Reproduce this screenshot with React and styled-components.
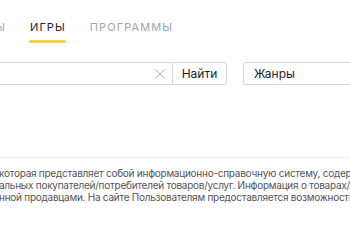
import styled, { createGlobalStyle } from 'styled-components'

const GlobalStyle = createGlobalStyle`
   html, body {
      margin: 0;
      padding: 0;
      background: #ffffff;
      overflow: hidden;
   }
   body {
      font-family: Inter, 'Noto Sans', Arial, sans-serif;
   }
`

const Page = styled.div`
   width: 350px;
   height: 250px;
   overflow: hidden;
   padding-top: 19px;
   box-sizing: border-box;
`

const Tabs = styled.nav`
   display: flex;
   gap: 24px;
   height: 24px;
`

const ClippedTab = styled.div`
   width: ${(p) => p.$width}px;
   overflow: hidden;
   display: flex;
   justify-content: flex-end;
`

const Tab = styled.a`
   position: relative;
   display: block;
   flex-shrink: 0;
   font-size: 11px;
   line-height: 16px;
   letter-spacing: 1.1px;
   text-transform: uppercase;
   color: ${(p) => (p.$active ? '#222222' : '#a3a3a3')};
   font-weight: 400;
   white-space: nowrap;
   text-decoration: none;

   &::after {
      content: '';
      display: ${(p) => (p.$active ? 'block' : 'none')};
      position: absolute;
      left: -1px;
      right: 0;
      top: 21px;
      height: 3px;
      border-radius: 2px;
      background: #f6d332;
   }
`

const SearchRow = styled.div`
   display: flex;
   align-items: stretch;
   margin: 19px -10px 0 -10px;
   height: 23px;
`

const InputWrap = styled.div`
   position: relative;
   flex: 1;
   border: 1px solid #d6d6d6;
   border-right: none;
   box-sizing: border-box;
`

const ClearIcon = styled.svg`
   position: absolute;
   right: 7px;
   top: 6px;
   width: 10px;
   height: 10px;
`

const FindButton = styled.button`
   width: 55px;
   flex-shrink: 0;
   box-sizing: border-box;
   border: 1px solid #d6d6d6;
   border-radius: 0 3px 3px 0;
   background: #ffffff;
   font-family: inherit;
   font-size: 12px;
   color: #222222;
   padding: 0;
`

const GenresBox = styled.div`
   margin-left: 16px;
   width: 117px;
   flex-shrink: 0;
   box-sizing: border-box;
   border: 1px solid #d6d6d6;
   border-radius: 3px;
   padding-left: 10px;
   display: flex;
   align-items: center;
   font-size: 12px;
   color: #222222;
`

const Divider = styled.div`
   margin-top: 72px;
   height: 1px;
   background: #ececec;
`

const Text = styled.div`
   margin-top: 9px;
   margin-left: -1px;
   font-size: 10px;
   line-height: 12px;
   letter-spacing: -0.25px;
   color: #555555;
   white-space: nowrap;
`

export default function App() {
   return (
      <Page>
         <GlobalStyle />
         <Tabs>
            <ClippedTab $width={6}>
               <Tab>Фильмы</Tab>
            </ClippedTab>
            <Tab $active>Игры</Tab>
            <Tab>Программы</Tab>
         </Tabs>

         <SearchRow>
            <InputWrap>
               <ClearIcon viewBox="0 0 10 10">
                  <path d="M0.5 0.5 L9.5 9.5 M9.5 0.5 L0.5 9.5" stroke="#b8b8b8" strokeWidth="1" fill="none" />
               </ClearIcon>
            </InputWrap>
            <FindButton>Найти</FindButton>
            <GenresBox>Жанры</GenresBox>
         </SearchRow>

         <Divider />

         <Text>
            которая представляет собой информационно-справочную систему, содержащую сведения
            <br />
            альных покупателей/потребителей товаров/услуг. Информация о товарах/услугах
            <br />
            нной продавцами. На сайте Пользователям предоставляется возможность оставлять
         </Text>
      </Page>
   )
}
